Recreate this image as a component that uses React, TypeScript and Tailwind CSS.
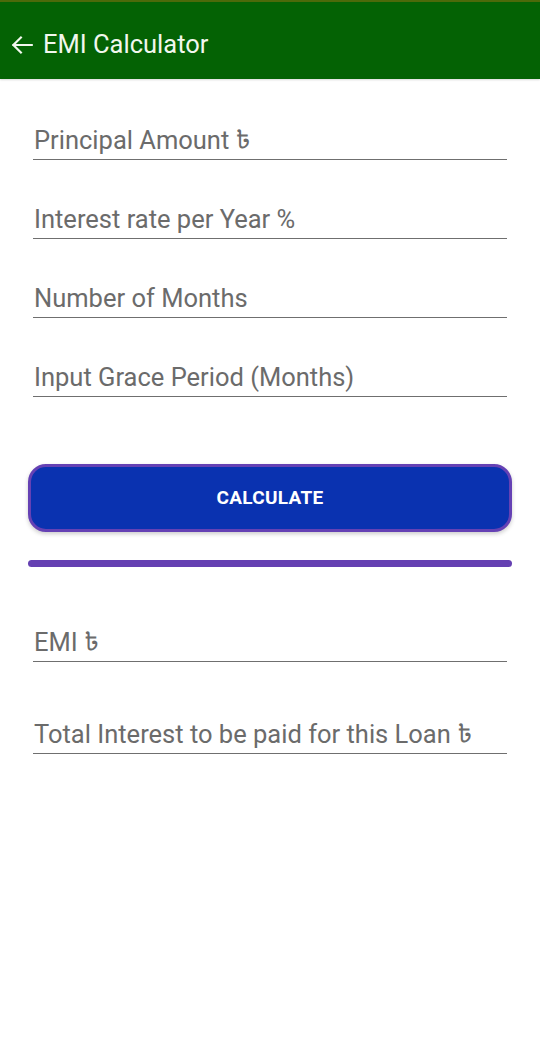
import React from 'react'

const fields = [
  'Principal Amount ৳',
  'Interest rate per Year %',
  'Number of Months',
  'Input Grace Period (Months)',
]

const Field = ({ label, className = '' }: { label: string; className?: string }) => (
  <div className={`mx-[33px] border-b-[1.5px] border-[#6f6f6f] pb-[3px] pl-px ${className}`}>
    <span className="block text-[25.5px] leading-[32px] text-[#6b6b6b]">{label}</span>
  </div>
)

const App: React.FC = () => {
  return (
    <div
      className="min-h-[1054px] w-[540px] bg-white"
      style={{ fontFamily: 'Roboto, "Noto Sans", "Noto Sans Bengali", sans-serif' }}
    >
      <header className="flex h-[79px] items-center gap-[8px] border-t-2 border-[#4d6a0a] bg-[#046204] pl-[9px] pt-[8px] shadow-[0_1px_2px_rgba(0,0,0,0.15)]">
        <svg width="26" height="26" viewBox="0 0 24 24" fill="none" stroke="#f2f7ee" strokeWidth="2" strokeLinecap="square">
          <path d="M21 12H4M11 5l-7 7 7 7" />
        </svg>
        <h1 className="text-[25.5px] font-normal text-[#f2f7ee]">EMI Calculator</h1>
      </header>

      <div className="flex flex-col gap-[43px] pt-[45px]">
        {fields.map((f) => (
          <Field key={f} label={f} />
        ))}
      </div>

      <div className="px-[28px] pt-[67px]">
        <button
          type="button"
          className="flex h-[68px] w-full items-center justify-center rounded-[18px] border-[3px] border-[#6541b4] bg-[#0a32b0] text-[19px] font-bold tracking-[0.3px] text-white shadow-[0_2px_4px_rgba(0,0,0,0.2)]"
        >
          CALCULATE
        </button>
        <div className="mt-[28px] h-[7px] w-full rounded-full bg-[#6540b2]" />
      </div>

      <div className="flex flex-col pt-[59px]">
        <Field label="EMI ৳" />
        <Field label="Total Interest to be paid for this Loan ৳" className="mt-[56px]" />
      </div>
    </div>
  )
}

export default App
